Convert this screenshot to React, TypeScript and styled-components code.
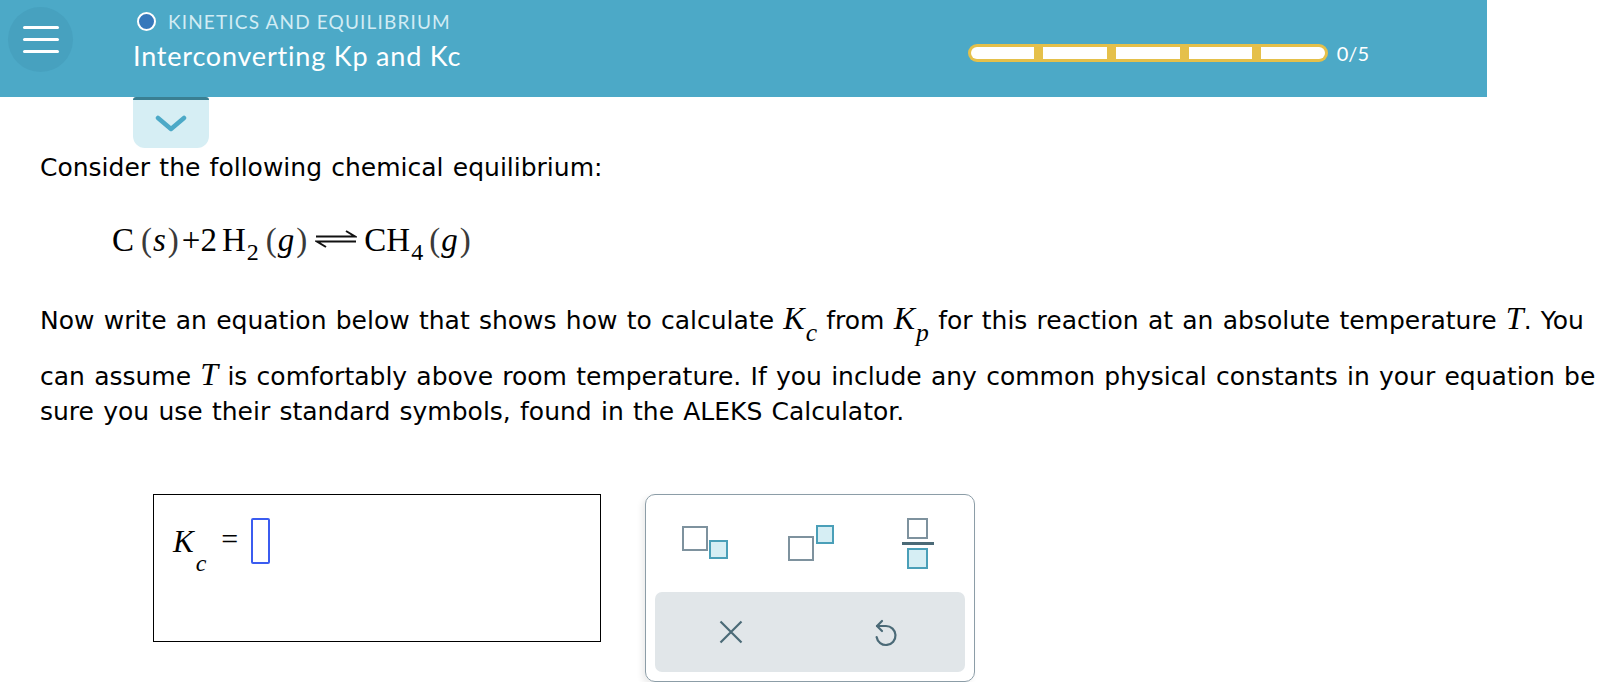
import React from "react";
import styled, { createGlobalStyle } from "styled-components";

const GlobalStyle = createGlobalStyle`
	html, body {
		margin: 0;
		padding: 0;
		background: #fff;
	}
	body {
		font-family: "DejaVu Sans", Verdana, sans-serif;
		color: #000;
	}
`;

const Header = styled.header`
	width: 1487px;
	height: 97px;
	background: #4ca9c7;
	display: flex;
	align-items: flex-start;
	box-sizing: border-box;
`;

const MenuButton = styled.div`
	width: 65px;
	height: 65px;
	margin: 7px 0 0 8px;
	border-radius: 50%;
	background: #47a1bf;
	display: flex;
	flex-direction: column;
	justify-content: center;
	align-items: center;
	gap: 9px;
`;

const MenuLine = styled.span`
	display: block;
	width: 36px;
	height: 3px;
	border-radius: 2px;
	background: #fff;
`;

const TitleBlock = styled.div`
	margin: 10px 0 0 60px;
	font-family: Lato, "Open Sans", sans-serif;
`;

const Category = styled.div`
	display: flex;
	align-items: center;
	gap: 12px;
	margin-left: 4px;
	font-size: 19px;
	letter-spacing: 1.15px;
	color: #d2ecf4;
`;

const Dot = styled.span`
	width: 15px;
	height: 15px;
	border-radius: 50%;
	background: #3678bb;
	border: 2px solid #fff;
`;

const Title = styled.div`
	margin-top: 6px;
	font-size: 27px;
	color: #fff;
	letter-spacing: 0.8px;
`;

const ProgressWrap = styled.div`
	margin: 44px 118px 0 auto;
	display: flex;
	align-items: center;
	gap: 9px;
	font-family: Lato, "Open Sans", sans-serif;
	font-size: 20px;
	color: #fff;
`;

const ProgressBar = styled.div`
	width: 360px;
	height: 18px;
	box-sizing: border-box;
	padding: 3px;
	background: #e5c04a;
	border-radius: 9px;
	display: flex;
	gap: 9px;
`;

const Segment = styled.div`
	flex: 1;
	background: #fff;
	&:first-child {
		border-radius: 6px 0 0 6px;
	}
	&:last-child {
		border-radius: 0 6px 6px 0;
	}
`;

const Count = styled.span`
	line-height: 18px;
`;

const Tab = styled.div`
	width: 76px;
	height: 51px;
	margin-left: 133px;
	box-sizing: border-box;
	border-top: 3px solid #3a7f92;
	border-radius: 3px 3px 12px 12px;
	background: #d6eef4;
	display: flex;
	align-items: center;
	justify-content: center;
`;

const Content = styled.main`
	padding-left: 40px;
	word-spacing: 1.3px;
`;

const Lead = styled.p`
	margin: 5px 0 0;
	font-size: 25px;
	line-height: 30px;
`;

const Equation = styled.div`
	margin: 35px 0 0 72px;
	font-family: "Liberation Serif", "Times New Roman", serif;
	font-size: 33px;
	line-height: 44px;
	white-space: nowrap;
	word-spacing: 0;
	display: flex;
	align-items: baseline;
`;

const Token = styled.span<{ $ml?: number }>`
	margin-left: ${({ $ml }) => $ml ?? 0}px;
`;

const Paren = styled.span<{ $ml?: number }>`
	margin-left: ${({ $ml }) => $ml ?? 0}px;
	color: #3a3a3a;
`;

const Var = styled.i`
	font-style: italic;
	color: #000;
	padding: 0 2px 0 1px;
`;

const Sub = styled.span<{ $ml?: number }>`
	font-size: 24px;
	position: relative;
	top: 9px;
	margin-left: ${({ $ml }) => $ml ?? 0}px;
`;

const Harpoons = styled.svg`
	margin: 0 7px 6px 8px;
	align-self: center;
`;

const Paragraph = styled.div`
	margin-top: 36px;
	font-size: 25px;
`;

const Line = styled.div<{ $after?: number }>`
	line-height: 35px;
	white-space: nowrap;
	margin-bottom: ${({ $after }) => $after ?? 0}px;
`;

const Math = styled.span`
	font-family: "Liberation Serif", "Times New Roman", serif;
	font-style: italic;
	font-size: 32px;
	word-spacing: 0;
`;

const MathSub = styled.sub`
	font-size: 0.8em;
	vertical-align: -0.45em;
	line-height: 0;
	margin-left: 1px;
`;

const Workspace = styled.div`
	display: flex;
	align-items: flex-start;
	margin: 65px 0 0 113px;
	gap: 44px;
`;

const AnswerBox = styled.div`
	width: 448px;
	height: 148px;
	box-sizing: border-box;
	border: 1px solid #000;
	padding: 23px 0 0 19px;
	display: flex;
	align-items: flex-start;
	font-family: "Liberation Serif", "Times New Roman", serif;
`;

const AnswerK = styled.span`
	font-style: italic;
	font-size: 31px;
	margin-top: 6px;
`;

const AnswerSub = styled.span`
	font-style: italic;
	font-size: 24px;
	margin: 32px 0 0 2px;
`;

const Equals = styled.span`
	font-size: 30px;
	margin: 4px 0 0 15px;
`;

const Slot = styled.span`
	width: 19px;
	height: 46px;
	box-sizing: border-box;
	border: 2px solid #3b5cf0;
	border-radius: 2px;
	margin-left: 13px;
`;

const Keypad = styled.div`
	width: 330px;
	height: 188px;
	box-sizing: border-box;
	border: 1px solid #8c9da7;
	border-radius: 10px;
	padding: 0 9px 9px;
	display: flex;
	flex-direction: column;
	box-shadow: -3px 3px 6px rgba(0, 0, 0, 0.08);
`;

const KeyRow = styled.div`
	flex: 1;
	display: flex;
	align-items: center;
	padding-left: 27px;
`;

const ActionRow = styled.div`
	height: 80px;
	background: #e1e6e9;
	border-radius: 7px;
	display: flex;
	align-items: center;
	padding-left: 64px;
	gap: 130px;
`;

const Key = styled.button<{ $ml?: number }>`
	border: 0;
	padding: 0;
	margin-left: ${({ $ml }) => $ml ?? 0}px;
	background: transparent;
	display: flex;
	align-items: center;
	justify-content: center;
`;

const GREY = "#7e929e";
const TEAL = "#4a9fb8";
const PALE = "#d6eef4";
const DARK = "#4b6a77";

function SubscriptIcon() {
	return (
		<svg width="48" height="36" viewBox="0 0 48 36">
			<rect x="1" y="1" width="24" height="23" fill="none" stroke={GREY} strokeWidth="2" />
			<rect x="28" y="15" width="17" height="17" fill={PALE} stroke={TEAL} strokeWidth="2" />
		</svg>
	);
}

function SuperscriptIcon() {
	return (
		<svg width="48" height="38" viewBox="0 0 48 38">
			<rect x="1" y="12" width="24" height="23" fill="none" stroke={GREY} strokeWidth="2" />
			<rect x="29" y="1" width="16" height="17" fill={PALE} stroke={TEAL} strokeWidth="2" />
		</svg>
	);
}

function FractionIcon() {
	return (
		<svg width="34" height="52" viewBox="0 0 34 52">
			<rect x="7" y="1" width="19" height="19" fill="none" stroke={GREY} strokeWidth="2" />
			<rect x="1" y="24" width="32" height="3" fill={DARK} />
			<rect x="7" y="31" width="19" height="19" fill={PALE} stroke={TEAL} strokeWidth="2" />
		</svg>
	);
}

function ClearIcon() {
	return (
		<svg width="24" height="24" viewBox="0 0 24 24">
			<path d="M1.5 1.5 L22.5 22.5 M22.5 1.5 L1.5 22.5" stroke={DARK} strokeWidth="2.2" fill="none" />
		</svg>
	);
}

function UndoIcon() {
	return (
		<svg width="26" height="30" viewBox="0 0 26 30">
			<path
				d="M4 9 H13 A9.5 9.5 0 1 1 3.6 20"
				stroke={DARK}
				strokeWidth="2.2"
				fill="none"
				strokeLinecap="round"
			/>
			<path
				d="M9 4 L4 9 L9 14"
				stroke={DARK}
				strokeWidth="2.2"
				fill="none"
				strokeLinecap="round"
				strokeLinejoin="round"
			/>
		</svg>
	);
}

export default function App() {
	return (
		<>
			<GlobalStyle />
			<Header>
				<MenuButton>
					<MenuLine />
					<MenuLine />
					<MenuLine />
				</MenuButton>
				<TitleBlock>
					<Category>
						<Dot />
						KINETICS AND EQUILIBRIUM
					</Category>
					<Title>Interconverting Kp and Kc</Title>
				</TitleBlock>
				<ProgressWrap>
					<ProgressBar>
						{[0, 1, 2, 3, 4].map((i) => (
							<Segment key={i} />
						))}
					</ProgressBar>
					<Count>0/5</Count>
				</ProgressWrap>
			</Header>
			<Tab>
				<svg width="32" height="20" viewBox="0 0 32 20">
					<path
						d="M3 4 L16 15 L29 4"
						stroke="#4ca9c7"
						strokeWidth="4.5"
						fill="none"
						strokeLinecap="round"
						strokeLinejoin="round"
					/>
				</svg>
			</Tab>
			<Content>
				<Lead>Consider the following chemical equilibrium:</Lead>
				<Equation>
					<Token>C</Token>
					<Paren $ml={7}>
						(<Var>s</Var>)
					</Paren>
					<Token $ml={3}>+2</Token>
					<Token $ml={5}>H</Token>
					<Sub $ml={1}>2</Sub>
					<Paren $ml={7}>
						(<Var>g</Var>)
					</Paren>
					<Harpoons width="42" height="18" viewBox="0 0 42 18">
						<path d="M1 6.5 H40 L31 1" stroke="#111" strokeWidth="2" fill="none" />
						<path d="M41 11.5 H2 L11 17" stroke="#111" strokeWidth="2" fill="none" />
					</Harpoons>
					<Token>CH</Token>
					<Sub $ml={1}>4</Sub>
					<Paren $ml={6}>
						(<Var>g</Var>)
					</Paren>
				</Equation>
				<Paragraph>
					<Line $after={19}>
						Now write an equation below that shows how to calculate{" "}
						<Math>
							K<MathSub>c</MathSub>
						</Math>{" "}
						from{" "}
						<Math>
							K<MathSub>p</MathSub>
						</Math>{" "}
						for this reaction at an absolute temperature <Math>T</Math>. You
					</Line>
					<Line>
						can assume <Math>T</Math> is comfortably above room temperature. If
						you include any common physical constants in your equation be
					</Line>
					<Line>
						sure you use their standard symbols, found in the ALEKS Calculator.
					</Line>
				</Paragraph>
				<Workspace>
					<AnswerBox>
						<AnswerK>K</AnswerK>
						<AnswerSub>c</AnswerSub>
						<Equals>=</Equals>
						<Slot />
					</AnswerBox>
					<Keypad>
						<KeyRow>
							<Key aria-label="subscript">
								<SubscriptIcon />
							</Key>
							<Key aria-label="superscript" $ml={58}>
								<SuperscriptIcon />
							</Key>
							<Key aria-label="fraction" $ml={65}>
								<FractionIcon />
							</Key>
						</KeyRow>
						<ActionRow>
							<Key aria-label="clear">
								<ClearIcon />
							</Key>
							<Key aria-label="undo">
								<UndoIcon />
							</Key>
						</ActionRow>
					</Keypad>
				</Workspace>
			</Content>
		</>
	);
}
